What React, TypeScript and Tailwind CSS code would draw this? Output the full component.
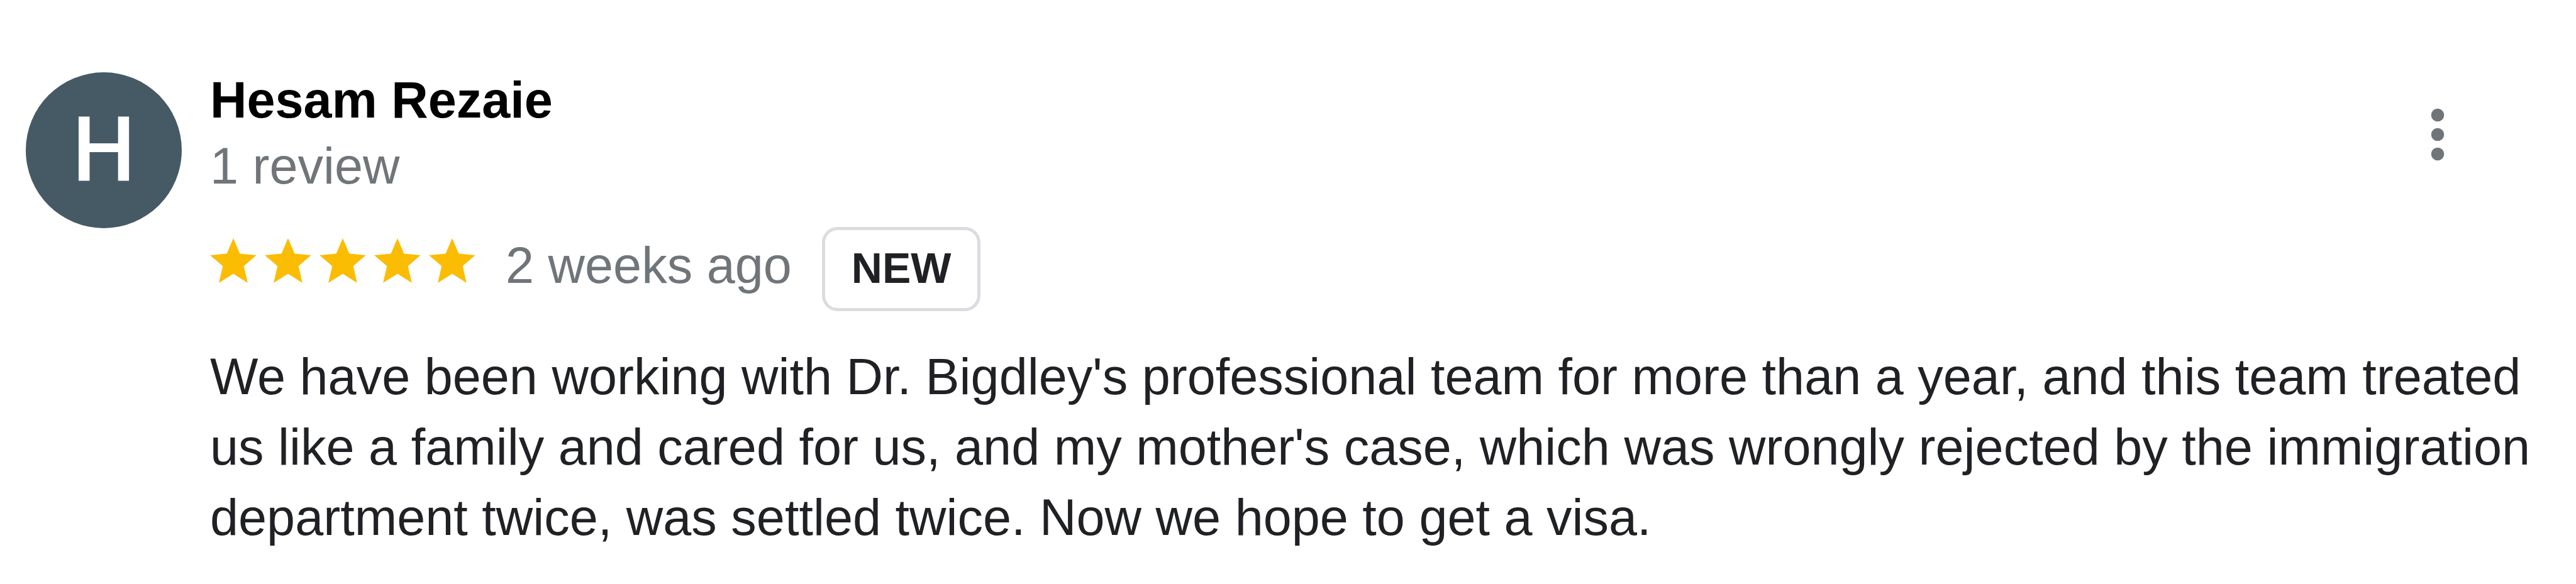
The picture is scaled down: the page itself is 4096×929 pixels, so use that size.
import React from "react";

const review = {
  author: "Hesam Rezaie",
  initial: "H",
  count: "1 review",
  rating: 5,
  date: "2 weeks ago",
  text: "We have been working with Dr. Bigdley's professional team for more than a year, and this team treated us like a family and cared for us, and my mother's case, which was wrongly rejected by the immigration department twice, was settled twice. Now we hope to get a visa.",
};

const Star = () => (
  <svg
    viewBox="0 0 96 92"
    fill="currentColor"
    className="w-[74px] h-[71px] text-[#fbbc04]"
  >
    <path d="M48 0l13.5 31.7L95.5 35 69.6 57.3l8 34.7L48 73.3 18.3 92l8-34.7L0 35l34.5-3.3z" />
  </svg>
);

const MoreIcon = () => (
  <svg viewBox="0 0 24 24" fill="currentColor" className="w-[124px] h-[124px]">
    <circle cx="12" cy="6" r="2" />
    <circle cx="12" cy="12" r="2" />
    <circle cx="12" cy="18" r="2" />
  </svg>
);

const App = () => {
  return (
    <main className="min-h-screen bg-white font-['Liberation_Sans',Arial,sans-serif] text-[81px] text-[#202124]">
      <article className="flex items-start gap-[45px] pl-[41px] pr-[60px] pt-[107px]">
        <div className="mt-2 flex size-[248px] shrink-0 items-center justify-center rounded-full bg-[#455a64] font-[Roboto,sans-serif] text-[142px] font-medium leading-none text-white">
          {review.initial}
        </div>

        <div className="min-w-0 flex-1">
          <header className="flex items-center justify-between pr-[98px]">
            <div className="leading-[105px]">
              <h2 className="font-bold text-black">
                <a href="#author">{review.author}</a>
              </h2>
              <p className="text-[#70757a]">{review.count}</p>
            </div>
            <button type="button" aria-label="More options" className="mt-1 text-[#70757a]">
              <MoreIcon />
            </button>
          </header>

          <div className="mt-11 flex items-baseline gap-12">
            <div className="flex gap-[13px]" role="img" aria-label="5 out of 5 stars">
              {Array.from({ length: review.rating }, (_, i) => (
                <Star key={i} />
              ))}
            </div>
            <span className="leading-[112px] text-[#70757a]">{review.date}</span>
            <span className="rounded-[25px] border-[5px] border-[#dadce0] px-[42px] pt-[18px] pb-[22px] text-[68px] font-bold leading-[84px]">
              NEW
            </span>
          </div>

          <p className="mt-12 leading-[112px]">{review.text}</p>
        </div>
      </article>
    </main>
  );
};

export default App;
